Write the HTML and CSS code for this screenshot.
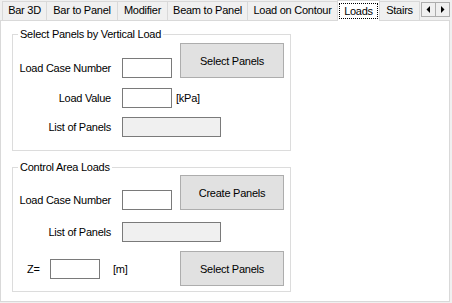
FILE: index.html
```html
<!DOCTYPE html>
<html>
<head>
<meta charset="utf-8">
<link rel="stylesheet" href="styles.css">
</head>
<body>
<div class="window">
  <div class="tabstrip">
    <div class="tab t1">Bar 3D</div>
    <div class="tab t2">Bar to Panel</div>
    <div class="tab t3">Modifier</div>
    <div class="tab t4">Beam to Panel</div>
    <div class="tab t5">Load on Contour</div>
    <div class="tab t6 selected"><span class="focus">Loads</span></div>
    <div class="tab t7">Stairs</div>
    <div class="scrollers">
      <div class="sbtn"><svg width="5" height="7" viewBox="0 0 5 7"><path d="M4 0 L4 7 L0.5 3.5 Z" fill="#000"/></svg></div>
      <div class="sbtn"><svg width="5" height="7" viewBox="0 0 5 7"><path d="M1 0 L1 7 L4.5 3.5 Z" fill="#000"/></svg></div>
    </div>
  </div>
  <div class="panel">
    <fieldset class="group g1">
      <legend>Select Panels by Vertical Load</legend>
      <div class="row ra1">
        <span class="label">Load Case Number</span>
        <span class="input"></span>
        <span class="button">Select Panels</span>
      </div>
      <div class="row rb1">
        <span class="label">Load Value</span>
        <span class="input"></span>
        <span class="unit kpa">[kPa]</span>
      </div>
      <div class="row rc1">
        <span class="label">List of Panels</span>
        <span class="input wide disabled"></span>
      </div>
    </fieldset>
    <fieldset class="group g2">
      <legend>Control Area Loads</legend>
      <div class="row ra2">
        <span class="label">Load Case Number</span>
        <span class="input"></span>
        <span class="button">Create Panels</span>
      </div>
      <div class="row rb2">
        <span class="label">List of Panels</span>
        <span class="input wide disabled"></span>
      </div>
      <div class="row rc2">
        <span class="zlabel">Z=</span>
        <span class="input"></span>
        <span class="unit m">[m]</span>
        <span class="button zbtn">Select Panels</span>
      </div>
    </fieldset>
  </div>
</div>
</body>
</html>
```
FILE: styles.css
```css
* { box-sizing: border-box; }
html, body {
  margin: 0;
  padding: 0;
  background: #f0f0f0;
}
body {
  font-family: "Liberation Sans", Arial, sans-serif;
  font-size: 11px;
  letter-spacing: -0.25px;
  color: #000;
  width: 452px;
  height: 303px;
  overflow: hidden;
}
.tabstrip {
  display: flex;
  align-items: flex-end;
  height: 21px;
  padding-left: 2px;
  position: relative;
  z-index: 1;
}
.tab {
  height: 19px;
  border: 1px solid #d9d9d9;
  border-bottom: none;
  margin-left: -1px;
  background: #f0f0f0;
  line-height: 17px;
  text-align: center;
  white-space: nowrap;
  margin-bottom: 1px;
}
.tab.t1 { margin-left: 0; width: 45px; }
.tab.t2 { width: 72px; }
.tab.t3 { width: 51px; }
.tab.t4 { width: 81px; }
.tab.t5 { width: 91px; }
.tab.t6 { width: 43px; }
.tab.t7 { width: 41px; }
.tab.selected {
  height: 21px;
  margin-bottom: 0;
  background: #fff;
  padding: 2px 1px 0 1px;
  line-height: 14px;
}
.focus {
  display: block;
  height: 16px;
  border: 1px dotted #000;
  line-height: 14px;
}
.scrollers {
  display: flex;
  margin-left: 1px;
  align-self: flex-start;
  margin-top: 2px;
}
.sbtn {
  width: 15px;
  height: 15px;
  border: 1px solid #adadad;
  background: #f0f0f0;
  display: flex;
  align-items: center;
  justify-content: center;
  margin-left: -1px;
}
.sbtn:first-child { margin-left: 0; }
.panel {
  margin-top: -1px;
  width: 450px;
  height: 282px;
  background: #fff;
  border: 1px solid #d9d9d9;
  padding: 7px 0 0 11px;
}
.group {
  margin: 0;
  padding: 0;
  width: 279px;
  border: 1px solid #dcdcdc;
  min-width: 0;
}
.group legend {
  padding: 0 2px;
  margin-left: 5px;
  line-height: 13px;
  height: 13px;
}
.g1 { height: 123px; }
.g2 { height: 131px; margin-top: 10px; }
.row {
  display: flex;
}
.label {
  width: 98px;
  text-align: right;
  margin-right: 11px;
  white-space: nowrap;
  line-height: 20px;
}
.input {
  width: 50px;
  height: 20px;
  border: 1px solid #7a7a7a;
  background: #fff;
}
.input.wide { width: 99px; }
.input.disabled { background: #f0f0f0; }
.button {
  width: 104px;
  height: 35px;
  border: 1px solid #adadad;
  background: #e1e1e1;
  display: flex;
  align-items: center;
  justify-content: center;
  margin-left: 8px;
}
.unit { line-height: 20px; }
.kpa { margin-left: 4px; }
.ra1 { margin-top: 2px; align-items: flex-end; }
.rb1 { margin-top: 10px; }
.rc1 { margin-top: 9px; }
.ra2 { margin-top: 1px; align-items: flex-end; }
.rb2 { margin-top: 12px; }
.rc2 { margin-top: 9px; align-items: center; }
.zlabel { margin-left: 14px; width: 23px; line-height: 20px; }
.m { margin-left: 13px; width: 17px; }
.zbtn { margin-left: 50px; }
```
